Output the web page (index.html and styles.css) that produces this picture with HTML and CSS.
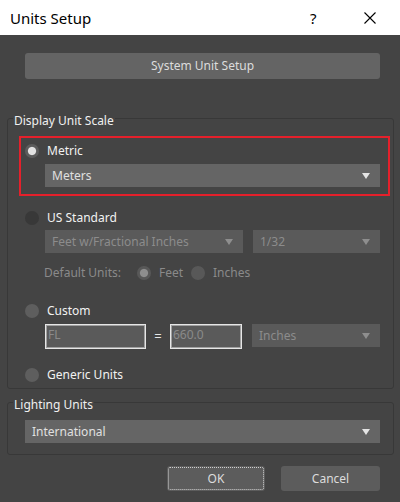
FILE: index.html
```html
<!DOCTYPE html>
<html>
<head>
<meta charset="utf-8">
<link rel="stylesheet" href="styles.css">
</head>
<body>
<div class="window">
  <div class="titlebar">
    <span class="title">Units Setup</span>
    <span class="help">?</span>
    <span class="close"><svg width="12" height="12" viewBox="0 0 12 12"><path d="M0.5 0.5 L11.5 11.5 M11.5 0.5 L0.5 11.5" stroke="#000" stroke-width="1.1" fill="none"/></svg></span>
  </div>
  <div class="content">
    <div class="btn sys">System Unit Setup</div>

    <fieldset class="group g1">
      <legend>Display Unit Scale</legend>
      <div class="highlight">
        <div class="opt"><span class="radio on"></span><span class="lbl">Metric</span></div>
        <div class="dd meters"><span>Meters</span><span class="arrow"></span></div>
      </div>

      <div class="opt us"><span class="radio dark"></span><span class="lbl">US Standard</span></div>
      <div class="ctrls us-ctrls">
        <div class="dd dis feet"><span>Feet w/Fractional Inches</span><span class="arrow"></span></div>
        <div class="dd dis frac"><span>1/32</span><span class="arrow"></span></div>
      </div>
      <div class="defunits">
        <span class="dlbl">Default Units:</span>
        <span class="radio on dis"></span><span class="sublbl feetlbl">Feet</span>
        <span class="radio dis"></span><span class="sublbl">Inches</span>
      </div>

      <div class="opt custom"><span class="radio"></span><span class="lbl">Custom</span></div>
      <div class="ctrls custom-ctrls">
        <div class="input fl">FL</div>
        <span class="eq">=</span>
        <div class="input num">660.0</div>
        <div class="dd dis inches"><span>Inches</span><span class="arrow"></span></div>
      </div>

      <div class="opt generic"><span class="radio"></span><span class="lbl">Generic Units</span></div>
    </fieldset>

    <fieldset class="group g2">
      <legend>Lighting Units</legend>
      <div class="dd intl"><span>International</span><span class="arrow"></span></div>
    </fieldset>

    <div class="actions">
      <div class="btn ok"><span class="focus">OK</span></div>
      <div class="btn cancel">Cancel</div>
    </div>
  </div>
</div>
</body>
</html>
```

FILE: styles.css
```css
* { box-sizing: border-box; }
html, body { margin: 0; padding: 0; }
body {
  width: 400px;
  height: 502px;
  background: #444444;
  font-family: "Noto Sans", "Open Sans", sans-serif;
  font-size: 12px;
  color: #e6e6e6;
  overflow: hidden;
}
.window { width: 400px; height: 502px; background: #444444; }

.titlebar {
  height: 35px;
  background: #ffffff;
  display: flex;
  align-items: center;
  color: #000;
}
.title { font-size: 15px; margin-left: 10px; flex: 1; line-height: 20px; }
.help { font-size: 15px; width: 54px; line-height: 20px; }
.close { width: 36px; display: flex; align-items: center; height: 12px; }
.close svg { display: block; }

.content { padding: 0 6px 0 7px; }

.btn {
  height: 26px;
  background: #646464;
  border-radius: 3px;
  color: #dcdcdc;
  display: flex;
  align-items: center;
  justify-content: center;
  line-height: 16px;
}
.sys { margin: 18px 14px 0 18px; }

.group {
  margin: 0;
  padding: 0;
  border: 1px solid #383838;
  border-radius: 3px;
  min-inline-size: 0;
}
.group legend {
  margin-left: 5px;
  padding: 6px 1px 0;
  line-height: 16px;
  color: #f0f0f0;
}
.g1 { margin-top: 28px; padding-bottom: 5px; }

.highlight {
  margin: 7px 3px 0 11px;
  border: 2px solid #e5202b;
  padding: 5px 8px 7px 4px;
}
.highlight .dd { margin: 5px 0 0 20px; }

.opt { display: flex; align-items: center; height: 16px; line-height: 16px; }
.opt .lbl { margin-left: 8px; color: #f2f2f2; }
.us, .custom, .generic { margin-left: 17px; }
.us { margin-top: 14px; }
.custom { margin-top: 22px; }
.generic { margin-top: 18px; }

.radio {
  width: 14px;
  height: 14px;
  border-radius: 50%;
  background: #5e5e5e;
  display: inline-block;
  flex: none;
}
.radio.dark { background: #383838; }
.radio.on { background: radial-gradient(circle at center, #e2e2e2 0 3.6px, #5c5c5c 4.6px); }
.radio.on.dis { background: radial-gradient(circle at center, #8e8e8e 0 3.6px, #585858 4.6px); }
.radio.dis { background: #585858; }

.dd {
  height: 23px;
  background: #656565;
  color: #e0e0e0;
  display: flex;
  align-items: center;
  justify-content: space-between;
  padding: 0 10px 0 7px;
  line-height: 16px;
}
.dd.dis { background: #5a5a5a; color: #8c8c8c; }
.arrow {
  width: 0; height: 0;
  border-left: 4px solid transparent;
  border-right: 4px solid transparent;
  border-top: 6px solid #e4e4e4;
}
.dd.dis .arrow { border-top-color: #8e8e8e; }

.ctrls { display: flex; margin-left: 37px; margin-right: 13px; }
.us-ctrls { margin-top: 4px; gap: 10px; }
.feet { width: 198px; }
.frac { flex: 1; }

.defunits {
  display: flex;
  align-items: center;
  height: 16px;
  margin: 12px 0 0 36px;
  color: #8a8a8a;
  line-height: 16px;
}
.dlbl { width: 93px; }
.sublbl { margin-left: 8px; }
.feetlbl { width: 32px; }

.custom-ctrls { margin-top: 5px; align-items: flex-start; }
.input {
  height: 25px;
  background: #5a5a5a;
  border: 1px solid #e6e6e6;
  box-shadow: inset 0 0 0 1px #a0a0a0;
  color: #8a8a8a;
  padding: 2px 0 0 2px;
  line-height: 16px;
}
.fl { width: 101px; }
.eq { width: 24px; text-align: center; line-height: 25px; color: #e6e6e6; font-size: 13px; }
.num { width: 72px; }
.inches { margin-left: 10px; flex: 1; }

.g2 { margin-top: 2px; padding-bottom: 11px; }
.intl { margin: 7px 13px 0 17px; }

.actions { display: flex; justify-content: flex-end; gap: 16px; margin: 11px 14px 0 0; }
.actions .btn { height: 25px; background: #5c5c5c; }
.ok { width: 98px; padding: 1px; }
.ok .focus {
  flex: 1;
  align-self: stretch;
  border: 1px dotted #d0d0d0;
  border-radius: 2px;
  display: flex;
  align-items: center;
  justify-content: center;
}
.cancel { width: 99px; }
```
